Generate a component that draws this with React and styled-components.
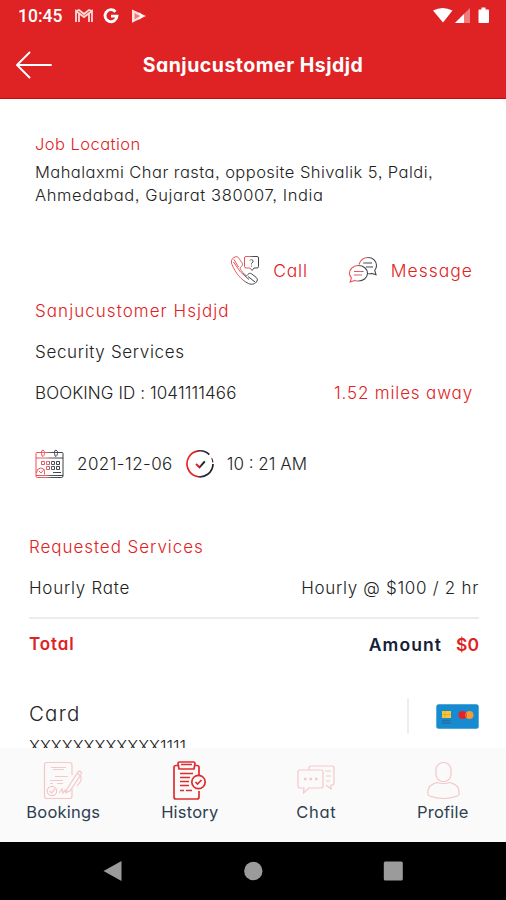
import React from "react";
import styled, { createGlobalStyle } from "styled-components";

const RED = "#df2224";
const NAVY = "#2f3f52";

const tabs = [
  { name: "Bookings", icon: <BookingsIcon />, spacing: 0.2 },
  { name: "History", icon: <HistoryIcon />, active: true, spacing: 0.2 },
  { name: "Chat", icon: <ChatIcon />, spacing: 0.7 },
  { name: "Profile", icon: <ProfileIcon />, spacing: 0.2 },
];

function App() {
  return (
    <Phone>
      <GlobalStyle />
      <Header>
        <StatusBar>
          <Clock>10:45</Clock>
          <StatusLeftIcons />
          <StatusRightIcons />
        </StatusBar>
        <TitleBar>
          <BackIcon />
          <Title>Sanjucustomer Hsjdjd</Title>
        </TitleBar>
      </Header>

      <Content>
        <Job>
          <Row height={24}>
            <Text red size={16.5} spacing={0.45}>Job Location</Text>
          </Row>
          <Address>
            <Text size={16.5} spacing={0.45}>Mahalaxmi Char rasta, opposite Shivalik 5, Paldi,</Text>
            <Text size={16.5} spacing={0.6}>Ahmedabad, Gujarat 380007, India</Text>
          </Address>
          <Actions>
            <Action>
              <CallIcon />
              <Text red size={17.5} spacing={0.8}>Call</Text>
            </Action>
            <Action>
              <MessageIcon />
              <Text red size={17.5} spacing={1}>Message</Text>
            </Action>
          </Actions>
          <Row height={41}>
            <Text red spacing={1.05}>Sanjucustomer Hsjdjd</Text>
          </Row>
          <Row height={41}>
            <Text spacing={0.65}>Security Services</Text>
          </Row>
          <Row height={41}>
            <Text spacing={0.1}>BOOKING ID : 1041111466</Text>
            <Text red spacing={0.85}>1.52 miles away</Text>
          </Row>
          <Schedule>
            <CalendarIcon />
            <Text spacing={0.45}>2021-12-06</Text>
            <ClockIcon />
            <Text>10 : 21 AM</Text>
          </Schedule>
        </Job>

        <Services>
          <Row height={41}>
            <Text red spacing={0.95}>Requested Services</Text>
          </Row>
          <Row height={41}>
            <Text spacing={0.75}>Hourly Rate</Text>
            <Text spacing={0.7}>Hourly @ $100 / 2 hr</Text>
          </Row>
          <Total>
            <Text red bold spacing={0.9}>Total</Text>
            <Amount>
              <Text navy bold size={17.5} spacing={1.1}>Amount</Text>
              <Text red bold size={17.5}>$0</Text>
            </Amount>
          </Total>
          <Payment>
            <PaymentName>
              <Text size={20.5} spacing={1.2}>Card</Text>
            </PaymentName>
            <CardSide>
              <CardIcon />
            </CardSide>
          </Payment>
          <Row height={24}>
            <Text size={16.5}>XXXXXXXXXXXX1111</Text>
          </Row>
        </Services>
      </Content>

      <TabBar>
        {tabs.map((tab) => (
          <Tab key={tab.name}>
            <TabIcon active={tab.active}>{tab.icon}</TabIcon>
            <TabLabel spacing={tab.spacing}>{tab.name}</TabLabel>
          </Tab>
        ))}
      </TabBar>

      <SystemNav>
        <svg width="20" height="22" viewBox="0 0 20 22"><path d="M.5 11 18.500 1v20z" fill="#9b9b9b" /></svg>
        <svg width="20" height="20" viewBox="0 0 20 20"><circle cx="10.300" cy="10" r="9.2" fill="#9b9b9b" /></svg>
        <svg width="20" height="20" viewBox="0 0 20 20"><rect x=".8" y=".5" width="19" height="19" rx="1.5" fill="#9b9b9b" /></svg>
      </SystemNav>
    </Phone>
  );
}

// Icons
function StatusLeftIcons() {
  return (
    <svg width="74" height="18" viewBox="0 0 74 18">
      <path d="M2 15V4l8 6 8-6v11M2 4l3-1 5 4 5-4 3 1M5 15V7M15 15V7" fill="none" stroke="#ffdada" strokeWidth="1.8" />
      <path d="M41.500 4.700A6 6 0 1 0 43 9.200H37" fill="none" stroke="#fff" strokeWidth="2.8" />
      <path d="M58 2.500 72 9l-14 6.8z" fill="#ffe1e1" />
      <path d="m60.500 6 5.500 3-5.500 3.5z" fill="#f37b7b" />
      <path d="m65 6 3 3-3 3" fill="none" stroke="#fff" strokeWidth="1.5" />
    </svg>
  );
}

function StatusRightIcons() {
  return (
    <StatusSvg width="58" height="18" viewBox="0 0 58 18">
      <path d="M0 3.500Q9.500-1.500 19.500 3.500L10 15.500z" fill="#fff" />
      <path d="M22 16 37 1v15z" fill="#ef7d7e" />
      <path d="M22 16 31 7v9z" fill="#fff" />
      <path d="M48.500 0.500h4v2h2.500q1 0 1 1v11.500q0 1-1 1h-8.500q-1 0-1-1V3.500q0-1 1-1h2z" fill="#fff" />
    </StatusSvg>
  );
}

function BackIcon() {
  return (
    <svg width="38" height="28" viewBox="0 0 38 28" fill="none" stroke="#fff" strokeWidth="1.9" strokeLinecap="round" strokeLinejoin="round">
      <path d="M36 14H2M14.500 1.500 2 14l12.500 12.500" />
    </svg>
  );
}

function Fade({ id }) {
  return (
    <linearGradient id={id} x1="0" x2="1">
      <stop offset="0" stopColor="#ee4b52" />
      <stop offset=".35" stopColor="#df6a70" />
      <stop offset=".6" stopColor="#4b505a" />
      <stop offset="1" stopColor="#3b3f49" />
    </linearGradient>
  );
}

function CallIcon() {
  return (
    <svg width="30" height="30" viewBox="0 0 30 30" fill="none" stroke="url(#call)" strokeWidth="1">
      <defs><Fade id="call" /></defs>
      <path d="M5 2C2 3 .5 6 2 9.500 5.500 18 11 25 18.500 28.500c3.500 1.500 7 .5 8.500-2.500.7-1.200.4-2.500-.7-3.500l-4.600-3.600c-1.300-1-2.700-.7-3.700.4l-1.400 1.600c-3-1.900-5.200-4.600-6.700-8l1.700-1.500c1.100-1 1.200-2.300.4-3.600L8.600 2.900C7.800 1.600 6.500 1.400 5 2z" />
      <path d="M4 4.500 8.500 12M18 21.500l7 5.500M3.500 7l7 10 8.500 7.500" />
      <path d="M16 1.500h11q1.500 0 1.500 1.500v8.500q0 1.500-1.500 1.500h-3l-2 2.500-2-2.500h-4q-1.500 0-1.500-1.500V3q0-1.500 1.500-1.500z" />
      <path d="M19.500 5.500q2-2 3.500 0 .8 1.500-1.500 2.800V9.500M21.500 10.700v1" />
    </svg>
  );
}

function MessageIcon() {
  return (
    <svg width="30" height="28" viewBox="0 0 30 28" fill="none" stroke="url(#msg)" strokeWidth="1.1">
      <defs><Fade id="msg" /></defs>
      <path d="M11 8.500C12.500 4 16 1.500 20 1.500c5 0 8.500 3.500 8.500 8 0 2-.7 3.700-1.800 5l1.300 4.200-4.500-1.300q-1.600.5-3.500.4" />
      <path d="M10.500 9.500c5 0 9 3.500 9 7.800s-4 7.700-9 7.700q-2 0-3.600-.6L2.200 26l1.200-4.200c-1.200-1.300-1.900-2.800-1.900-4.500 0-4.300 4-7.800 9-7.800z" />
      <path d="M15 7h9M18 11h7M6 15.500h9.500M6 19h8" />
    </svg>
  );
}

function CalendarIcon() {
  return (
    <svg width="30" height="30" viewBox="0 0 30 30" fill="none" stroke="url(#cal)" strokeWidth="1">
      <defs><Fade id="cal" /></defs>
      <path d="M1 4.500q0-1 1-1h25q1 0 1 1V27q0 1.500-1.500 1.500h-24Q1 28.500 1 27zM1 9h27M1 26.500h27" />
      <path d="M8 1q2 1 1.500 3.500T8 7.500 6.500 4.500 8 1zM21 1q2 1 1.500 3.500T21 7.500t-1.500-3T21 1z" />
      <path d="M6.500 12.500h3v3h-3zM11.500 12.500h3v3h-3zM16.500 12.500h3v3h-3zM21.500 12.500h3v3h-3zM11.500 17.500h3v3h-3zM16.500 17.500h3v3h-3zM21.500 17.500h3v3h-3z" />
      <path d="M1.500 24q0-4.500 4-5 3 0 4 2.500v4M4 22l2 2 3.500-4M18 23.500h8" />
    </svg>
  );
}

function ClockIcon() {
  return (
    <svg width="30" height="30" viewBox="0 0 30 30" fill="none" stroke="url(#clock)" strokeWidth="1.7">
      <defs>
        <linearGradient id="clock" x1="0" x2="1">
          <stop offset="0" stopColor="#ed2027" />
          <stop offset=".32" stopColor="#df2224" />
          <stop offset=".58" stopColor="#262c3b" />
          <stop offset="1" stopColor="#181a20" />
        </linearGradient>
      </defs>
      <path d="M24.300 5.700A13 13 0 1 0 28 15" />
      <path d="M26.500 9q1.200 2 1.400 4.500" strokeWidth="1.100" />
      <path d="m11 15 3.500 3.300 5.300-6" strokeWidth="2" />
    </svg>
  );
}

function CardIcon() {
  return (
    <svg width="43" height="25" viewBox="0 0 43 25">
      <rect x=".3" y=".3" width="42.400" height="24.400" rx="2.500" fill="#168bd0" />
      <rect x="6" y="7" width="9" height="7" fill="#f7c538" />
      <path d="M6 10.500h9M9 7v7" stroke="#daa42c" strokeWidth=".6" />
      <path d="M6 16.500h8.500M6 19h8.500" stroke="#2370a5" strokeWidth="1.500" />
      <circle cx="33.500" cy="11" r="4" fill="#f39b35" />
      <circle cx="26.500" cy="11" r="4" fill="#e5222c" />
      <path d="M30 9v4" stroke="#ec602e" strokeWidth="2" />
    </svg>
  );
}

function BookingsIcon() {
  return (
    <svg width="40" height="40" viewBox="0 0 40 40">
      <path d="M29 14V4q0-2.500-2.500-2.500h-23Q1.500 1.500 1.500 4v31q0 2.500 2.500 2.500h22.500q2.500 0 2.500-2.500v-7" />
      <path d="M8 6.500h15M10 8.500h11M12 15.500h13M7 19.500h13M7 22.500h3M14 22.500h6" />
      <path d="m24 28 11-17q1.500-1.500 3 0 1 1 0 2.500L27 30l-4 1.500zM34 12l3 2.500M38 15v5l-4 5" />
      <circle cx="9" cy="30" r="4.700" />
      <path d="m6.500 30 2 2 3.500-4M16 32l3-4 1 4 2.500-3 1 3" />
    </svg>
  );
}

function HistoryIcon() {
  return (
    <svg width="36" height="40" viewBox="0 0 36 40">
      <path d="M6 4.500H4q-2 0-2 2V36q0 2 2 2h21q2 0 2-2v-6M23 4.500h2q2 0 2 2V15M6 2.500q0-1.500 1.500-1.500h14Q23 1 23 2.500L22 8H7zM9 3.500h11" />
      <path d="M8 12.500h13M8 16.500h10M8 20.500h9M8 24.500h9M8 29.500h4M14 29.500h6" />
      <circle cx="26.500" cy="21" r="6.700" fill="#fafafa" />
      <path d="m23.500 21 2 2 4-4" />
    </svg>
  );
}

function ChatIcon() {
  return (
    <svg width="40" height="40" viewBox="0 0 40 40">
      <path d="M13 9V7q0-2 2-2h21q2 0 2 2v15q0 2-2 2h-1v4l-5-4" />
      <path d="M4 9h21q2 0 2 2v14q0 2-2 2H13l-5.500 5L8 27H4q-2 0-2-2V11q0-2 2-2z" />
      <path d="M29 10h6M30 15h5M30 20h4" />
      <path d="M8 18h2.500M13.500 18H16M19 18h2.500" strokeWidth="2.500" />
    </svg>
  );
}

function ProfileIcon() {
  return (
    <svg width="36" height="40" viewBox="0 0 36 40">
      <rect x="11" y="1.500" width="15" height="19" rx="7" />
      <path d="M12 21.500Q3 24 3 30v3q0 1.500 1.500 2 14 5 28 0Q34 34.500 34 33v-3q0-6-9-8.500-6.500 2-13 0z" />
    </svg>
  );
}

// Style
const GlobalStyle = createGlobalStyle`
  body {
    margin: 0;
    background: #fff;
    font-family: Inter, "Open Sans", sans-serif;
    font-feature-settings: "cv11", "ss03";
  }

  * { box-sizing: border-box; }
  svg { display: block; flex: none; }
`;

const Phone = styled.div`
  width: 506px;
  height: 900px;
  display: flex;
  flex-direction: column;
  overflow: hidden;
`;

const Header = styled.header`
  height: 99px;
  background: ${RED};
  color: #fff;
  border-bottom: 1px solid #c9090b;
`;

const StatusBar = styled.div`
  height: 31px;
  display: flex;
  align-items: center;
  padding: 0 15px 0 18px;
`;

const Clock = styled.span`
  width: 56px;
  font-family: Roboto, sans-serif;
  font-size: 17.5px;
  font-weight: 500;
`;

const StatusSvg = styled.svg`
  margin-left: auto;
`;

const TitleBar = styled.div`
  height: 68px;
  display: grid;
  grid-template-columns: 38px 1fr 38px;
  align-items: center;
  padding: 0 15px;
`;

const Title = styled.h1`
  margin: 0;
  text-align: center;
  font-size: 19.5px;
  font-weight: 650;
  letter-spacing: 0.5px;
  white-space: nowrap;
`;

const Content = styled.main`
  height: 649px;
  overflow: hidden;
`;

const Job = styled.section`
  padding: 33px 33px 0 35px;
`;

const Row = styled.div`
  height: ${(props) => props.height}px;
  display: flex;
  align-items: center;
  justify-content: space-between;
`;

const Text = styled.span.withConfig({
  shouldForwardProp: (prop) => !["red", "navy", "bold", "size", "spacing"].includes(prop),
})`
  font-size: ${(props) => props.size || 17}px;
  font-weight: ${(props) => (props.bold ? 600 : 330)};
  letter-spacing: ${(props) => props.spacing || 0}px;
  color: ${(props) => (props.red ? RED : props.navy ? "#142139" : "#222")};
  white-space: nowrap;
`;

const Address = styled.div`
  margin-top: 5px;
  display: flex;
  flex-direction: column;
  line-height: 23px;
`;

const Actions = styled.div`
  height: 40px;
  margin-top: 43px;
  display: flex;
  justify-content: flex-end;
  align-items: center;
  gap: 40px;
`;

const Action = styled.div`
  display: flex;
  align-items: center;
  gap: 13px;
`;

const Schedule = styled.div`
  height: 44px;
  margin-top: 29px;
  display: flex;
  align-items: center;
  gap: 12px;
`;

const Services = styled.section`
  padding: 40px 27px 0 29px;
`;

const Total = styled.div`
  height: 52px;
  margin-top: 9px;
  border-top: 2px solid #ececec;
  display: flex;
  align-items: center;
  justify-content: space-between;
`;

const Amount = styled.div`
  display: flex;
  gap: 14px;
`;

const Payment = styled.div`
  height: 36px;
  margin-top: 29px;
  display: flex;
  align-items: center;
  justify-content: space-between;
`;

const PaymentName = styled.div`
  padding-bottom: 5px;
`;

const CardSide = styled.div`
  height: 36px;
  padding-left: 27px;
  border-left: 2px solid #eee;
  display: flex;
  align-items: center;
`;

const TabBar = styled.nav`
  height: 94px;
  display: grid;
  grid-template-columns: repeat(4, 1fr);
  background: #fafafa;
`;

const Tab = styled.div`
  display: flex;
  flex-direction: column;
  align-items: center;
  padding-top: 13px;
`;

const TabIcon = styled.div.withConfig({
  shouldForwardProp: (prop) => prop !== "active",
})`
  svg {
    fill: none;
    stroke: ${(props) => (props.active ? "#e02c2f" : "#f5c8ca")};
    stroke-width: ${(props) => (props.active ? 1.7 : 1.2)};
  }
`;

const TabLabel = styled.span`
  font-size: 16.5px;
  font-weight: 370;
  line-height: 22px;
  letter-spacing: ${(props) => props.spacing}px;
  color: ${NAVY};
`;

const SystemNav = styled.div`
  height: 58px;
  display: flex;
  align-items: center;
  justify-content: center;
  gap: 120px;
  background: #000;
`;

export default App;
